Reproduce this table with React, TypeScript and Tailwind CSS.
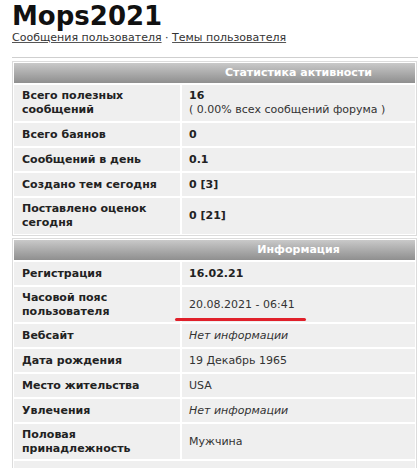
import React from "react";

type Row = { label: React.ReactNode; value: React.ReactNode; tall?: boolean; underline?: boolean };

const Header = ({ title }: { title: string }) => (
  <div className="flex h-[20px] bg-gradient-to-b from-[#c9c9c9] to-[#8f8f8f]">
    <div className="w-[168px] shrink-0" />
    <div className="flex-1 text-center text-white font-bold leading-[20px]">{title}</div>
  </div>
);

const Cells = ({ rows, tallH }: { rows: Row[]; tallH: string }) => (
  <>
    {rows.map((r, i) => (
      <div key={i} className={`flex gap-[2px] ${r.tall ? tallH : "h-[23px]"}`}>
        <div className="w-[166px] shrink-0 bg-[#efefef] pl-[8px] flex items-center font-bold text-[#222] leading-[14px]">
          <div>{r.label}</div>
        </div>
        <div className="flex-1 bg-[#efefef] pl-[7px] flex items-center text-[#333] leading-[14px] relative">
          <div>{r.value}</div>
          {r.underline && (
            <div className="absolute left-[-7px] top-[31px] w-[131px] h-[3px] rounded-full bg-[#e0202a]" />
          )}
        </div>
      </div>
    ))}
  </>
);

export default function App() {
  const stats: Row[] = [
    {
      label: (<>Всего полезных<br />сообщений</>),
      value: (<><b className="text-[#222]">16</b><br />( 0.00% всех сообщений форума )</>),
      tall: true,
    },
    { label: "Всего баянов", value: <b className="text-[#222]">0</b> },
    { label: "Сообщений в день", value: <b className="text-[#222]">0.1</b> },
    { label: "Создано тем сегодня", value: <b className="text-[#222]">0 [3]</b> },
    {
      label: (<>Поставлено оценок<br />сегодня</>),
      value: <b className="text-[#222]">0 [21]</b>,
      tall: true,
    },
  ];
  const info: Row[] = [
    { label: "Регистрация", value: <b className="text-[#222]">16.02.21</b> },
    {
      label: (<>Часовой пояс<br />пользователя</>),
      value: "20.08.2021 - 06:41",
      tall: true,
      underline: true,
    },
    { label: "Вебсайт", value: <i>Нет информации</i> },
    { label: "Дата рождения", value: "19 Декабрь 1965" },
    { label: "Место жительства", value: "USA" },
    { label: "Увлечения", value: <i>Нет информации</i> },
    {
      label: (<>Половая<br />принадлежность</>),
      value: "Мужчина",
      tall: true,
    },
  ];

  return (
    <div className="w-[418px] h-[468px] overflow-hidden bg-white text-[11px] text-[#222]" style={{ fontFamily: '"DejaVu Sans", Verdana, sans-serif' }}>
      <div className="pl-[12px]">
        <h1 className="text-[26px] font-bold leading-[30px] pt-[1px] text-[#111]">Mops2021</h1>
        <div className="text-[#333] leading-[14px]">
          <span className="underline decoration-[#555]">Сообщения пользователя</span>
          {" · "}
          <span className="underline decoration-[#555]">Темы пользователя</span>
        </div>
        <div className="mt-[12px] h-px bg-[#cfcfcf]" />
        <div className="mt-[3px] w-[405px] border border-[#dcdcdc] p-px flex flex-col gap-[2px]">
          <Header title="Статистика активности" />
          <Cells rows={stats} tallH="h-[36px]" />
        </div>
        <div className="mt-[2px] w-[405px] border border-[#dcdcdc] p-px flex flex-col gap-[2px]">
          <Header title="Информация" />
          <Cells rows={info} tallH="h-[35px]" />
          <div className="h-[23px] bg-[#efefef]" />
        </div>
      </div>
    </div>
  );
}
